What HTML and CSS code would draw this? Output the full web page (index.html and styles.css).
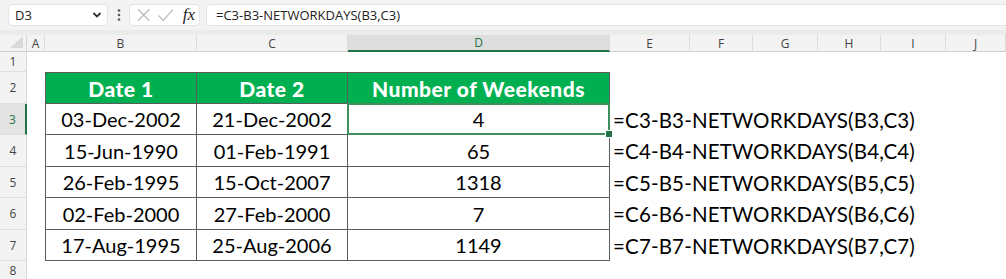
FILE: index.html
```html
<!DOCTYPE html>
<html>

<head>
  <title>Number of Weekends</title>
  <link rel="stylesheet" href="styles.css">
</head>

<body>
  <div class="formula-bar">
    <div class="name-box">
      <span>D3</span>
      <svg class="chevron" width="10" height="8" viewBox="0 0 10 8">
        <path d="M1.5 2 L5 5.5 L8.5 2" fill="none" stroke="#333" stroke-width="1.8" />
      </svg>
    </div>
    <svg class="dots" width="4" height="14" viewBox="0 0 4 14">
      <circle cx="2" cy="2.5" r="1.3" fill="#555" />
      <circle cx="2" cy="7" r="1.3" fill="#555" />
      <circle cx="2" cy="11.5" r="1.3" fill="#555" />
    </svg>
    <div class="fx-box">
      <svg width="16" height="16" viewBox="0 0 16 16">
        <path d="M2 2 L14 14 M14 2 L2 14" stroke="#b8b8b8" stroke-width="1.2" />
      </svg>
      <svg width="18" height="16" viewBox="0 0 18 16">
        <path d="M1.5 8.5 L6.5 13.5 L16.5 2.5" fill="none" stroke="#b8b8b8" stroke-width="1.2" />
      </svg>
      <span class="fx">fx</span>
    </div>
    <div class="formula-input">=C3-B3-NETWORKDAYS(B3,C3)</div>
  </div>
  <div class="band"></div>

  <div class="sheet">
    <!-- column headers -->
    <div class="corner"><span class="tri"></span></div>
    <div class="col-head">A</div>
    <div class="col-head">B</div>
    <div class="col-head">C</div>
    <div class="col-head active">D</div>
    <div class="col-head">E</div>
    <div class="col-head">F</div>
    <div class="col-head">G</div>
    <div class="col-head">H</div>
    <div class="col-head">I</div>
    <div class="col-head">J</div>

    <!-- row 1 -->
    <div class="row-head">1</div>
    <div></div><div></div><div></div><div></div><div></div><div></div><div></div><div></div><div></div><div></div>

    <!-- row 2 -->
    <div class="row-head">2</div>
    <div></div>
    <div class="tbl hdr first">Date 1</div>
    <div class="tbl hdr">Date 2</div>
    <div class="tbl hdr">Number of Weekends</div>
    <div></div><div></div><div></div><div></div><div></div><div></div>

    <!-- row 3 -->
    <div class="row-head active">3</div>
    <div></div>
    <div class="tbl first">03-Dec-2002</div>
    <div class="tbl">21-Dec-2002</div>
    <div class="tbl selected">4</div>
    <div class="formula">=C3-B3-NETWORKDAYS(B3,C3)</div>
    <div></div><div></div><div></div><div></div><div></div>

    <!-- row 4 -->
    <div class="row-head">4</div>
    <div></div>
    <div class="tbl first">15-Jun-1990</div>
    <div class="tbl">01-Feb-1991</div>
    <div class="tbl">65</div>
    <div class="formula">=C4-B4-NETWORKDAYS(B4,C4)</div>
    <div></div><div></div><div></div><div></div><div></div>

    <!-- row 5 -->
    <div class="row-head">5</div>
    <div></div>
    <div class="tbl first">26-Feb-1995</div>
    <div class="tbl">15-Oct-2007</div>
    <div class="tbl">1318</div>
    <div class="formula">=C5-B5-NETWORKDAYS(B5,C5)</div>
    <div></div><div></div><div></div><div></div><div></div>

    <!-- row 6 -->
    <div class="row-head">6</div>
    <div></div>
    <div class="tbl first">02-Feb-2000</div>
    <div class="tbl">27-Feb-2000</div>
    <div class="tbl">7</div>
    <div class="formula">=C6-B6-NETWORKDAYS(B6,C6)</div>
    <div></div><div></div><div></div><div></div><div></div>

    <!-- row 7 -->
    <div class="row-head">7</div>
    <div></div>
    <div class="tbl first">17-Aug-1995</div>
    <div class="tbl">25-Aug-2006</div>
    <div class="tbl">1149</div>
    <div class="formula">=C7-B7-NETWORKDAYS(B7,C7)</div>
    <div></div><div></div><div></div><div></div><div></div>

    <!-- row 8 -->
    <div class="row-head last">8</div>
    <div></div><div></div><div></div><div></div><div></div><div></div><div></div><div></div><div></div><div></div>
  </div>
</body>

</html>
```

FILE: styles.css
```css
* {
  box-sizing: border-box;
}

body {
  margin: 0;
  width: 1006px;
  height: 279px;
  overflow: hidden;
  background: #fff;
  font-family: Lato, "Open Sans", sans-serif;
}

/* formula bar */

.formula-bar {
  display: flex;
  align-items: center;
  height: 30px;
  padding: 4px 0 4px 8px;
  background: #f3f3f3;
  font-family: "Open Sans", sans-serif;
  font-size: 13px;
  color: #222;
}

.name-box {
  display: flex;
  align-items: center;
  justify-content: space-between;
  width: 100px;
  height: 22px;
  padding: 0 5px 0 6px;
  background: #fff;
  border: 1px solid #e4e4e4;
  border-radius: 4px;
}

.dots {
  margin: 0 8px 0 9px;
}

.fx-box {
  display: flex;
  align-items: center;
  gap: 6px;
  width: 71px;
  height: 22px;
  padding: 0 4px 0 6px;
  background: #fff;
  border: 1px solid #e4e4e4;
  border-radius: 4px;
}

.fx {
  font-family: "Liberation Serif", serif;
  font-style: italic;
  font-size: 17px;
  color: #222;
  margin-left: 2px;
}

.formula-input {
  flex: 1;
  height: 22px;
  margin-left: 6px;
  padding: 1px 9px;
  background: #fff;
  border: 1px solid #e4e4e4;
  border-right: 0;
  border-radius: 4px 0 0 4px;
}

.band {
  height: 5px;
  background: #e9ece8;
}

/* sheet grid */

.sheet {
  display: grid;
  grid-template-columns: 27px 18px 152px 151px 262px 80px 63px 65px 63px 65px 60px;
  grid-template-rows: 17px 20px 32px 31px 32px 31px 32px 31px 18px;
}

.corner {
  position: relative;
  background: #f3f3f3;
  border-right: 1px solid #d6d6d6;
  border-bottom: 1px solid #d0d0d0;
}

.tri {
  position: absolute;
  right: 3px;
  bottom: 3px;
  width: 0;
  height: 0;
  border-left: 13px solid transparent;
  border-bottom: 12px solid #d9d9d9;
}

.col-head {
  display: flex;
  align-items: center;
  justify-content: center;
  background: #f3f3f3;
  border-right: 1px solid #dcdcdc;
  border-bottom: 1px solid #cfcfcf;
  font-family: "Open Sans", sans-serif;
  font-size: 12px;
  color: #444;
}

.col-head.active {
  background: #dedede;
  border-bottom: 2px solid #217346;
  color: #217346;
}

.row-head {
  display: flex;
  align-items: center;
  justify-content: center;
  background: #f3f3f3;
  border-right: 1px solid #dcdcdc;
  border-bottom: 1px solid #dedede;
  font-family: "Open Sans", sans-serif;
  font-size: 12px;
  color: #444;
}

.row-head.active {
  background: #e3e3e3;
  border-right: 2px solid #217346;
  color: #217346;
}

.row-head.last {
  border-bottom: 0;
}

/* the data table */

.tbl {
  display: flex;
  align-items: center;
  justify-content: center;
  border-right: 1px solid #5c5c5c;
  border-bottom: 1px solid #5c5c5c;
  font-size: 20px;
  color: #000;
  white-space: nowrap;
}

.tbl.first {
  border-left: 1px solid #5c5c5c;
}

.tbl.hdr {
  border-top: 1px solid #5c5c5c;
  background: #00b050;
  color: #fff;
  font-size: 21px;
  font-weight: 900;
  letter-spacing: 0.5px;
}

.tbl.selected {
  position: relative;
}

.tbl.selected::after {
  content: "";
  position: absolute;
  left: -1px;
  top: -1px;
  right: -1px;
  bottom: -1px;
  border: 2px solid #3f8f5c;
}

.tbl.selected::before {
  content: "";
  position: absolute;
  right: -4px;
  bottom: -4px;
  width: 6px;
  height: 6px;
  background: #217346;
  border: 1px solid #fff;
  z-index: 1;
}

.formula {
  display: flex;
  align-items: center;
  padding-left: 3px;
  font-size: 20.5px;
  letter-spacing: 0.15px;
  color: #000;
  white-space: nowrap;
}
```
